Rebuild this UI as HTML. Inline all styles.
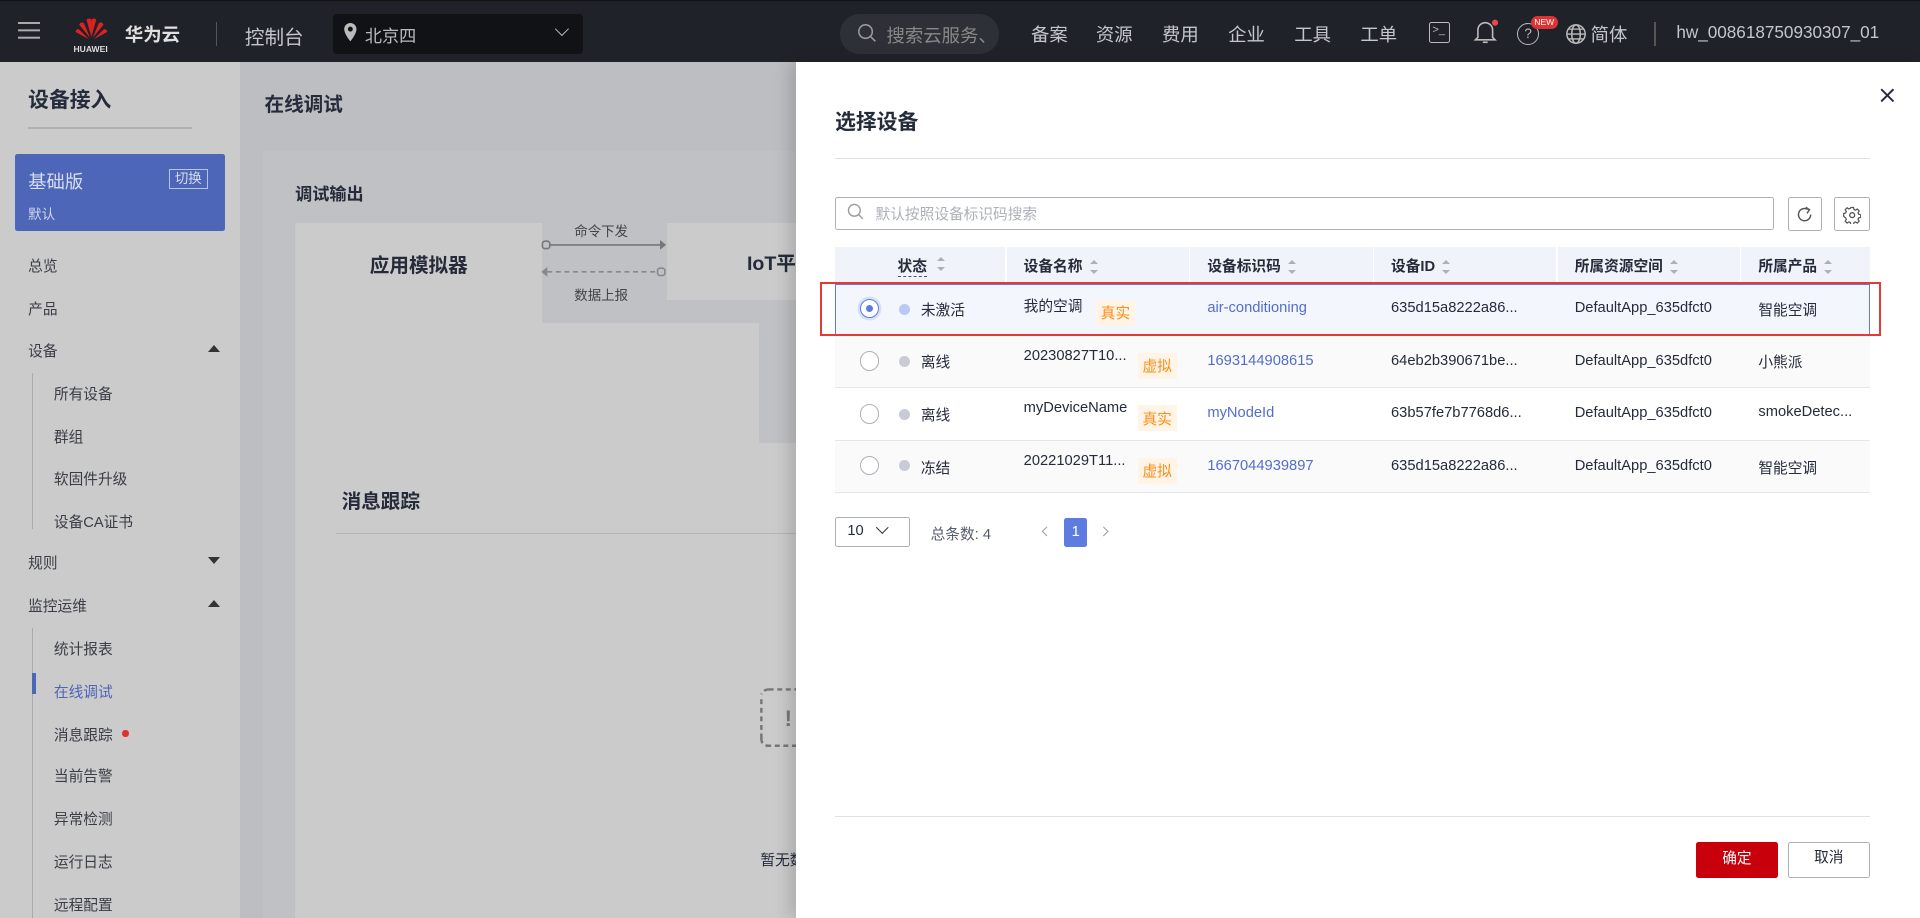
<!DOCTYPE html>
<html><head><meta charset="utf-8"><style>
*{box-sizing:border-box;margin:0;padding:0}
html,body{width:1920px;height:918px;overflow:hidden;background:#fff}
#w{zoom:1.22449;width:1568px;height:750px;position:relative;font-family:"Liberation Sans","Noto Sans CJK SC",sans-serif;font-size:12px;color:#252b3a;overflow:hidden}
.a{position:absolute;white-space:nowrap}
.hd{left:0;top:0;width:1568px;height:51px;background:#20222a;border-top:1px solid #111}
.hd .t{color:#c4c6cc;font-size:15px;top:16px}
.side{left:0;top:51px;width:196px;height:699px;background:#cbcbcb}
.mi{left:23px;font-size:12px;color:#3a3d45}
.sub{left:44px;font-size:12px;color:#3a3d45}
.main{left:196px;top:51px;width:454px;height:699px;background:#bdbec2}
.drawer{left:650px;top:51px;width:918px;height:699px;background:#fff;box-shadow:-6px 0 12px rgba(0,0,0,.15)}
.th{font-weight:bold;font-size:12px;top:208px;color:#252b3a}
.sort{display:inline-block;vertical-align:middle;margin-left:6px;width:7px;height:11px;position:relative}
.sort:before{content:"";position:absolute;top:0;left:0;border:3.5px solid transparent;border-bottom:4px solid #adb0b8;border-top:0}
.sort:after{content:"";position:absolute;bottom:0;left:0;border:3.5px solid transparent;border-top:4px solid #adb0b8;border-bottom:0}
.row{left:682px;width:845px;border-bottom:1px solid #e4e6ec}
.rd{width:16px;height:16px;border-radius:50%;border:1px solid #adb0b8;background:#fff}
.dot{width:9px;height:9px;border-radius:50%;background:#c8cbd3}
.cell{font-size:12px;color:#252b3a;margin-top:-1px}
.lnk{color:#526ecc}
.tag{font-size:12px;color:#f98e1a;background:#fff4e6;padding:2px 4px}
</style></head><body><div id="w">
<div class="a hd">
 <div class="a" style="left:15px;top:17px;width:18px;height:2px;background:#aaa;box-shadow:0 6px 0 #aaa,0 12px 0 #aaa"></div>
 <svg class="a" style="left:60px;top:12px" width="30" height="22" viewBox="0 0 30 22"><g fill="#d22">
 <path d="M15 17 L11 3 Q13 1 15 3Z"/><path d="M15 17 L19 3 Q17 1 15 3Z"/><path d="M14 18 L5 7 Q7 4 9 6Z"/><path d="M16 18 L25 7 Q23 4 21 6Z"/><path d="M13 19 L2 13 Q3 10 5 11Z"/><path d="M17 19 L28 13 Q27 10 25 11Z"/></g></svg>
 <div class="a" style="left:60px;top:35px;font-size:7px;color:#ddd;font-weight:bold">HUAWEI</div>
 <div class="a t" style="left:102px;font-weight:bold;color:#e0e0e0">华为云</div>
 <div class="a" style="left:176px;top:17px;width:1px;height:20px;background:#555"></div>
 <div class="a t" style="left:200px;font-size:16px">控制台</div>
 <div class="a" style="left:272px;top:11px;width:204px;height:32px;background:#111215;border-radius:3px"></div>
 <svg class="a" style="left:280px;top:18px" width="12" height="16" viewBox="0 0 12 16"><path d="M6 0a5 5 0 0 0-5 5c0 4 5 10 5 10s5-6 5-10a5 5 0 0 0-5-5z" fill="#bbb"/><circle cx="6" cy="5" r="2" fill="#111"/></svg>
 <div class="a t" style="left:298px;color:#bbb;font-size:14px;top:17px">北京四</div>
 <div class="a" style="left:455px;top:19px;width:8px;height:8px;border-right:1.5px solid #bbb;border-bottom:1.5px solid #bbb;transform:rotate(45deg)"></div>
 <div class="a" style="left:686px;top:11px;width:130px;height:32px;background:#2e3038;border-radius:16px"></div>
 <svg class="a" style="left:700px;top:18px" width="16" height="16"><circle cx="7" cy="7" r="5.5" stroke="#999" fill="none" stroke-width="1.3"/><path d="M11 11l4 4" stroke="#999" stroke-width="1.3"/></svg>
 <div class="a t" style="left:724px;color:#888;top:17px">搜索云服务、</div>
 <div class="a t" style="left:842px">备案</div><div class="a t" style="left:895px">资源</div><div class="a t" style="left:949px">费用</div><div class="a t" style="left:1003px">企业</div><div class="a t" style="left:1057px">工具</div><div class="a t" style="left:1111px">工单</div>
 <div class="a" style="left:1167px;top:17px;width:17px;height:17px;border:1.3px solid #bbb;border-radius:2px;font-size:9px;color:#bbb;padding-left:2px;line-height:13px">&gt;_</div>
 <svg class="a" style="left:1203px;top:15px" width="20" height="22"><path d="M4 15V9a6 6 0 0 1 12 0v6l2 2H2z" fill="none" stroke="#bbb" stroke-width="1.3"/><path d="M8 19h4" stroke="#bbb" stroke-width="1.3"/><circle cx="18" cy="3" r="2.5" fill="#e45"/></svg>
 <div class="a" style="left:1239px;top:18px;width:18px;height:18px;border:1.3px solid #bbb;border-radius:50%;color:#bbb;font-size:11px;text-align:center;line-height:16px">?</div>
 <div class="a" style="left:1250px;top:12px;background:#d33;color:#fff;font-size:7px;border-radius:6px;padding:0 3px;line-height:11px">NEW</div>
 <svg class="a" style="left:1278px;top:18px" width="18" height="18"><circle cx="9" cy="9" r="7.5" fill="none" stroke="#bbb" stroke-width="1.2"/><ellipse cx="9" cy="9" rx="3.5" ry="7.5" fill="none" stroke="#bbb" stroke-width="1.2"/><path d="M1.5 9h15M3 5h12M3 13h12" stroke="#bbb" stroke-width="1.1"/></svg>
 <div class="a t" style="left:1299px">简体</div>
 <div class="a" style="left:1351px;top:17px;width:1px;height:20px;background:#555"></div>
 <div class="a t" style="left:1369px;font-size:14px;top:17px">hw_008618750930307_01</div>
</div>
<div class="a side">
 <div class="a" style="left:23px;top:17px;font-size:17px;font-weight:bold;color:#252b3a">设备接入</div>
 <div class="a" style="left:23px;top:53px;width:134px;height:1px;background:#b0b1b6"></div>
 <div class="a" style="left:12px;top:75px;width:172px;height:63px;background:#4d66b8;border-radius:2px"></div>
 <div class="a" style="left:23px;top:86px;font-size:15px;color:#d8ddf0">基础版</div>
 <div class="a" style="left:138px;top:87px;border:1px solid #b7c2e6;color:#d8ddf0;font-size:11px;padding:0 4px;line-height:15px">切换</div>
 <div class="a" style="left:23px;top:115px;font-size:11px;color:#d0d5ea">默认</div>
 <div class="a mi" style="top:157px">总览</div>
 <div class="a mi" style="top:192px">产品</div>
 <div class="a mi" style="top:227px">设备</div>
 <div class="a" style="left:170px;top:231px;border:5px solid transparent;border-bottom:6px solid #333;border-top:0"></div>
 <div class="a" style="left:26px;top:254px;width:1px;height:127px;background:#aaa"></div>
 <div class="a sub" style="top:262px">所有设备</div>
 <div class="a sub" style="top:297px">群组</div>
 <div class="a sub" style="top:331px">软固件升级</div>
 <div class="a sub" style="top:366px">设备CA证书</div>
 <div class="a mi" style="top:400px">规则</div>
 <div class="a" style="left:170px;top:404px;border:5px solid transparent;border-top:6px solid #333;border-bottom:0"></div>
 <div class="a mi" style="top:435px">监控运维</div>
 <div class="a" style="left:170px;top:439px;border:5px solid transparent;border-bottom:6px solid #333;border-top:0"></div>
 <div class="a" style="left:26px;top:462px;width:1px;height:240px;background:#aaa"></div>
 <div class="a" style="left:26px;top:499px;width:3px;height:17px;background:#4d66b8"></div>
 <div class="a sub" style="top:470px">统计报表</div>
 <div class="a sub" style="top:505px;color:#4d66b8">在线调试</div>
 <div class="a sub" style="top:540px">消息跟踪</div>
 <div class="a" style="left:100px;top:545px;width:5px;height:6px;border-radius:50%;background:#d33"></div>
 <div class="a sub" style="top:574px">当前告警</div>
 <div class="a sub" style="top:609px">异常检测</div>
 <div class="a sub" style="top:644px">运行日志</div>
 <div class="a sub" style="top:679px">远程配置</div>
</div>
<div class="a main">
 <div class="a" style="left:20px;top:21px;font-size:16px;font-weight:bold">在线调试</div>
 <div class="a" style="left:19px;top:72px;width:440px;height:630px;background:#c0c1c4"></div>
 <div class="a" style="left:45px;top:96px;font-size:14px;font-weight:bold">调试输出</div>
 <div class="a" style="left:45px;top:131px;width:202px;height:100px;background:#cbcbcb"></div>
 <div class="a" style="left:106px;top:152px;font-size:16px;font-weight:bold">应用模拟器</div>
 <div class="a" style="left:349px;top:131px;width:110px;height:63px;background:#cbcbcb"></div>
 <div class="a" style="left:414px;top:151px;font-size:16px;font-weight:bold">IoT平</div>
 <div class="a" style="left:45px;top:213px;width:379px;height:98px;background:#cbcbcb"></div>
 <div class="a" style="left:45px;top:200px;width:202px;height:20px;background:#cbcbcb"></div>
 <div class="a" style="left:273px;top:129px;font-size:11px;color:#444">命令下发</div>
 <svg class="a" style="left:245px;top:145px" width="106" height="30"><rect x="2" y="1" width="6" height="6" rx="2" fill="none" stroke="#777" stroke-width="1.3"/><path d="M8 4h92" stroke="#777" stroke-width="1.3"/><path d="M98 0l5 4-5 4z" fill="#777"/><path d="M6 26h90" stroke="#888" stroke-width="1.3" stroke-dasharray="4 3"/><path d="M6 22l-5 4 5 4z" fill="#888"/><rect x="96" y="23" width="6" height="6" rx="2" fill="none" stroke="#888" stroke-width="1.3"/></svg>
 <div class="a" style="left:273px;top:181px;font-size:11px;color:#444">数据上报</div>
 <div class="a" style="left:45px;top:311px;width:414px;height:400px;background:#cbcbcb"></div>
 <div class="a" style="left:83px;top:345px;font-size:16px;font-weight:bold">消息跟踪</div>
 <div class="a" style="left:78px;top:384px;width:380px;height:1px;background:#b5b5b5"></div>
 <svg class="a" style="left:420px;top:510px" width="40" height="50"><path d="M12 2h28M10 48h30M6 10v32M12 2q-4 0-6 4M6 42q0 6 6 6" stroke="#777" stroke-width="2" fill="none" stroke-dasharray="4 3"/><text x="25" y="32" font-size="18" font-weight="bold" fill="#777" font-family="Liberation Sans">!</text></svg>
 <div class="a" style="left:425px;top:642px;font-size:12px">暂无数</div>
</div>
<div class="a drawer"></div>
<div class="a" style="left:682px;top:86px;font-size:17px;font-weight:bold">选择设备</div>
<svg class="a" style="left:1535px;top:72px" width="12" height="12"><path d="M1 1l10 10M11 1L1 11" stroke="#252b3a" stroke-width="1.6"/></svg>
<div class="a" style="left:682px;top:129px;width:845px;height:1px;background:#dfe1e6"></div>
<div class="a" style="left:682px;top:161px;width:767px;height:27px;border:1px solid #adb0b8;border-radius:2px"></div>
<svg class="a" style="left:692px;top:166px" width="14" height="14"><circle cx="6" cy="6" r="4.8" fill="none" stroke="#999" stroke-width="1.1"/><path d="M9.5 9.5l3.5 3.5" stroke="#999" stroke-width="1.1"/></svg>
<div class="a" style="left:715px;top:166px;font-size:12px;color:#adb0b8">默认按照设备标识码搜索</div>
<div class="a" style="left:1460px;top:161px;width:28px;height:28px;border:1px solid #adb0b8;border-radius:2px"></div>
<svg class="a" style="left:1467px;top:168px" width="14" height="14"><path d="M12 7A5 5 0 1 1 9.5 2.7" fill="none" stroke="#555" stroke-width="1.2"/><path d="M8 1l3 2-2 3" fill="none" stroke="#555" stroke-width="1.2"/></svg>
<div class="a" style="left:1498px;top:161px;width:29px;height:28px;border:1px solid #adb0b8;border-radius:2px"></div>
<svg class="a" style="left:1505px;top:168px" width="15" height="15" viewBox="0 0 15 15"><circle cx="7.5" cy="7.5" r="2" fill="none" stroke="#555" stroke-width="1.1"/><path d="M6.3 1h2.4l.4 1.8 1.3.6 1.6-1 1.7 1.7-1 1.6.6 1.3 1.8.4v2.4l-1.8.4-.6 1.3 1 1.6-1.7 1.7-1.6-1-1.3.6-.4 1.8H6.3l-.4-1.8-1.3-.6-1.6 1-1.7-1.7 1-1.6-.6-1.3L-.1 8.7V6.3l1.8-.4.6-1.3-1-1.6 1.7-1.7 1.6 1 1.3-.6z" transform="translate(.6 .3) scale(.92)" fill="none" stroke="#555" stroke-width="1.1"/></svg>
<div class="a" style="left:682px;top:202px;width:845px;height:30px;background:#f1f3fa"></div>
<div class="a" style="left:821px;top:202px;width:1px;height:30px;background:#fff"></div>
<div class="a" style="left:971px;top:202px;width:1px;height:30px;background:#fff"></div>
<div class="a" style="left:1121px;top:202px;width:1px;height:30px;background:#fff"></div>
<div class="a" style="left:1271px;top:202px;width:1px;height:30px;background:#fff"></div>
<div class="a" style="left:1421px;top:202px;width:1px;height:30px;background:#fff"></div>
<div class="a th" style="left:733px;border-bottom:1px dashed #555">状态</div><div class="a" style="left:759px;top:209px"><span class="sort"></span></div>
<div class="a th" style="left:836px">设备名称<span class="sort"></span></div>
<div class="a th" style="left:986px">设备标识码<span class="sort"></span></div>
<div class="a th" style="left:1136px">设备ID<span class="sort"></span></div>
<div class="a th" style="left:1286px">所属资源空间<span class="sort"></span></div>
<div class="a th" style="left:1436px">所属产品<span class="sort"></span></div>

<div class="a row" style="top:232px;height:42px;background:#f3f6fd;border:1px solid #5e7ce0"></div>
<div class="a row" style="top:274px;height:43px;background:#fafafa"></div>
<div class="a row" style="top:317px;height:43px;background:#fff"></div>
<div class="a row" style="top:360px;height:43px;background:#fafafa"></div>
<div class="a" style="left:670px;top:230px;width:866px;height:44px;border:2px solid #e53935"></div>

<div class="a rd" style="left:702px;top:244px;border:1px solid #5e7ce0;box-shadow:0 0 0 2px #d7e0fa"></div>
<div class="a" style="left:707px;top:249px;width:6px;height:6px;border-radius:50%;background:#5e7ce0"></div>
<div class="a dot" style="left:734px;top:248px;background:#b9c8f5"></div>
<div class="a cell" style="left:752px;top:245px">未激活</div>
<div class="a cell" style="left:836px;top:242px">我的空调</div>
<div class="a tag" style="left:895px;top:245px">真实</div>
<div class="a cell lnk" style="left:986px;top:246px">air-conditioning</div>
<div class="a cell" style="left:1136px;top:246px">635d15a8222a86...</div>
<div class="a cell" style="left:1286px;top:246px">DefaultApp_635dfct0</div>
<div class="a cell" style="left:1436px;top:245px">智能空调</div>

<div class="a rd" style="left:702px;top:287px"></div>
<div class="a dot" style="left:734px;top:291px"></div>
<div class="a cell" style="left:752px;top:288px">离线</div>
<div class="a cell" style="left:836px;top:285px">20230827T10...</div>
<div class="a tag" style="left:929px;top:288px">虚拟</div>
<div class="a cell lnk" style="left:986px;top:289px">1693144908615</div>
<div class="a cell" style="left:1136px;top:289px">64eb2b390671be...</div>
<div class="a cell" style="left:1286px;top:289px">DefaultApp_635dfct0</div>
<div class="a cell" style="left:1436px;top:288px">小熊派</div>

<div class="a rd" style="left:702px;top:330px"></div>
<div class="a dot" style="left:734px;top:334px"></div>
<div class="a cell" style="left:752px;top:331px">离线</div>
<div class="a cell" style="left:836px;top:328px">myDeviceName</div>
<div class="a tag" style="left:929px;top:331px">真实</div>
<div class="a cell lnk" style="left:986px;top:332px">myNodeId</div>
<div class="a cell" style="left:1136px;top:332px">63b57fe7b7768d6...</div>
<div class="a cell" style="left:1286px;top:332px">DefaultApp_635dfct0</div>
<div class="a cell" style="left:1436px;top:331px">smokeDetec...</div>

<div class="a rd" style="left:702px;top:372px"></div>
<div class="a dot" style="left:734px;top:376px"></div>
<div class="a cell" style="left:752px;top:374px">冻结</div>
<div class="a cell" style="left:836px;top:371px">20221029T11...</div>
<div class="a tag" style="left:929px;top:374px">虚拟</div>
<div class="a cell lnk" style="left:986px;top:375px">1667044939897</div>
<div class="a cell" style="left:1136px;top:375px">635d15a8222a86...</div>
<div class="a cell" style="left:1286px;top:375px">DefaultApp_635dfct0</div>
<div class="a cell" style="left:1436px;top:374px">智能空调</div>

<div class="a" style="left:682px;top:422px;width:61px;height:25px;border:1px solid #adb0b8;border-radius:2px"></div>
<div class="a cell" style="left:692px;top:428px">10</div>
<div class="a" style="left:717px;top:427px;width:7px;height:7px;border-right:1.5px solid #333;border-bottom:1.5px solid #333;transform:rotate(45deg)"></div>
<div class="a cell" style="left:760px;top:428px;color:#575d6c">总条数: 4</div>
<div class="a" style="left:852px;top:431px;width:6px;height:6px;border-left:1px solid #999;border-bottom:1px solid #999;transform:rotate(45deg)"></div>
<div class="a" style="left:869px;top:423px;width:19px;height:24px;background:#5e7ce0;color:#fff;text-align:center;line-height:24px;border-radius:2px">1</div>
<div class="a" style="left:898px;top:431px;width:6px;height:6px;border-right:1px solid #999;border-top:1px solid #999;transform:rotate(45deg)"></div>

<div class="a" style="left:682px;top:666px;width:845px;height:1px;background:#dfe1e6"></div>
<div class="a" style="left:1385px;top:688px;width:67px;height:29px;background:#c7000b;border-radius:2px;color:#fff;text-align:center;line-height:28px">确定</div>
<div class="a" style="left:1460px;top:688px;width:67px;height:29px;border:1px solid #adb0b8;border-radius:2px;text-align:center;line-height:26px">取消</div>
</div></body></html>
